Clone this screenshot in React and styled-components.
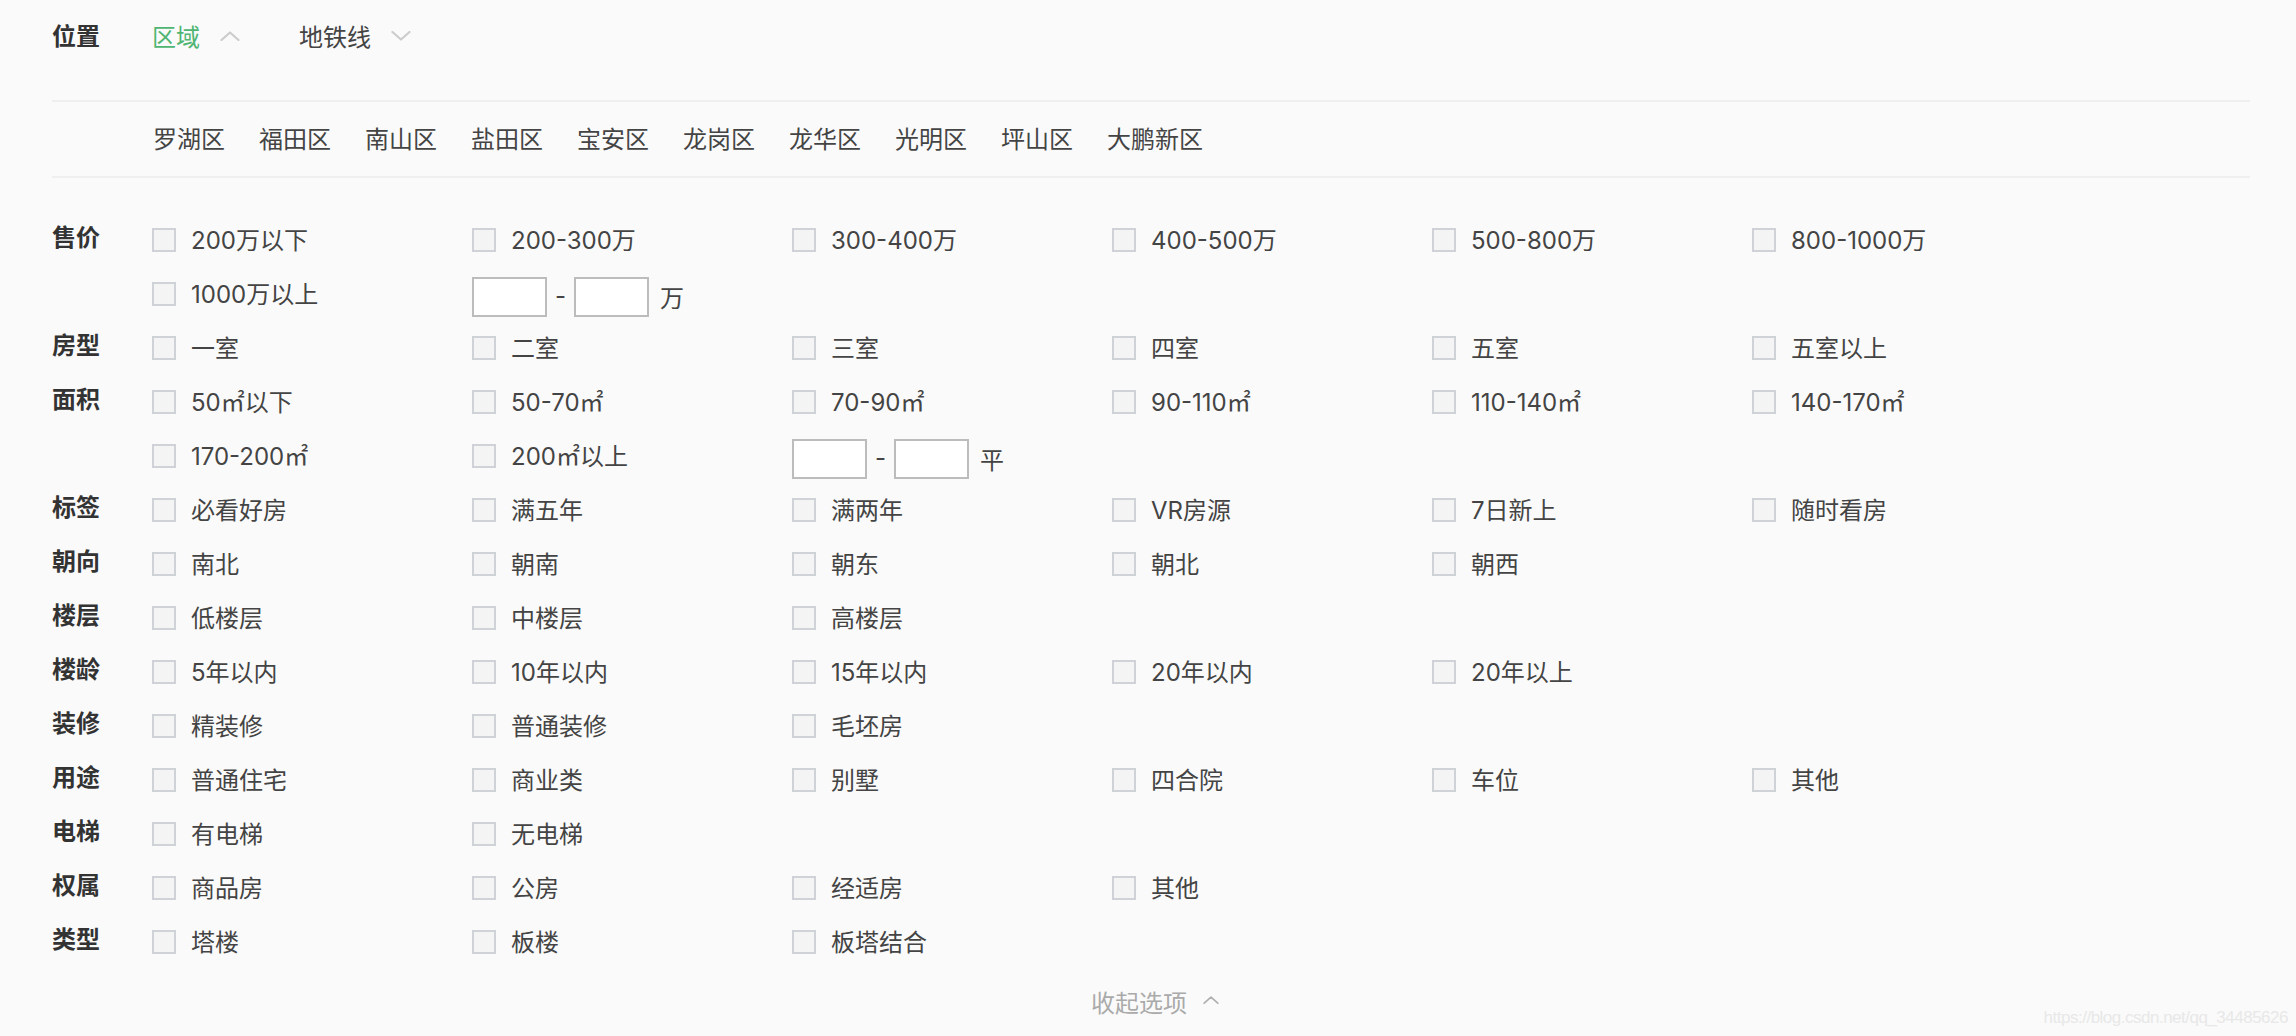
import React from "react";
import styled, { createGlobalStyle } from "styled-components";

const GlobalStyle = createGlobalStyle`
  html, body {
    margin: 0;
    padding: 0;
    background: #fafafa;
  }
  body {
    font-family: Inter, "Noto Sans CJK SC", sans-serif;
    color: #333;
  }
`;

const filters = [
  {
    label: "售价",
    options: ["200万以下", "200-300万", "300-400万", "400-500万", "500-800万", "800-1000万", "1000万以上"],
    range: "万",
  },
  { label: "房型", options: ["一室", "二室", "三室", "四室", "五室", "五室以上"] },
  {
    label: "面积",
    options: ["50㎡以下", "50-70㎡", "70-90㎡", "90-110㎡", "110-140㎡", "140-170㎡", "170-200㎡", "200㎡以上"],
    range: "平",
  },
  { label: "标签", options: ["必看好房", "满五年", "满两年", "VR房源", "7日新上", "随时看房"] },
  { label: "朝向", options: ["南北", "朝南", "朝东", "朝北", "朝西"] },
  { label: "楼层", options: ["低楼层", "中楼层", "高楼层"] },
  { label: "楼龄", options: ["5年以内", "10年以内", "15年以内", "20年以内", "20年以上"] },
  { label: "装修", options: ["精装修", "普通装修", "毛坯房"] },
  { label: "用途", options: ["普通住宅", "商业类", "别墅", "四合院", "车位", "其他"] },
  { label: "电梯", options: ["有电梯", "无电梯"] },
  { label: "权属", options: ["商品房", "公房", "经适房", "其他"] },
  { label: "类型", options: ["塔楼", "板楼", "板塔结合"] },
];

const districts = ["罗湖区", "福田区", "南山区", "盐田区", "宝安区", "龙岗区", "龙华区", "光明区", "坪山区", "大鹏新区"];

const Chevron = ({ up, color = "#cccccc", w = 20, h = 10 }) => (
  <svg width={w} height={h} viewBox="0 0 20 10" fill="none">
    <polyline
      points={up ? "1.5,9 10,1.5 18.5,9" : "1.5,1 10,8.5 18.5,1"}
      stroke={color}
      strokeWidth="2.2"
      strokeLinecap="round"
      strokeLinejoin="round"
    />
  </svg>
);

const App = () => {
  return (
    <>
      <GlobalStyle />
      <Page>
        <Header>
          <Label>位置</Label>
          <Tab $active>
            区域
            <Chevron up />
          </Tab>
          <Tab>
            地铁线
            <Chevron />
          </Tab>
        </Header>
        <Districts>
          {districts.map((d) => (
            <District key={d}>{d}</District>
          ))}
        </Districts>
        <Options>
          {filters.map((f) => (
            <FilterRow key={f.label}>
              <Label>{f.label}</Label>
              <Grid>
                {f.options.map((o) => (
                  <Item key={o}>
                    <Box />
                    <ItemText>{o}</ItemText>
                  </Item>
                ))}
                {f.range && (
                  <Range>
                    <Input />
                    <Dash>-</Dash>
                    <Input />
                    <Unit>{f.range}</Unit>
                  </Range>
                )}
              </Grid>
            </FilterRow>
          ))}
        </Options>
        <Footer>
          <Collapse>
            收起选项
            <Chevron up color="#b0b0b0" w={16} h={8} />
          </Collapse>
        </Footer>
        <Watermark>https://blog.csdn.net/qq_34485626</Watermark>
      </Page>
    </>
  );
};

const Page = styled.div`
  position: relative;
  height: 1036px;
  padding: 0 46px 0 52px;
  box-sizing: border-box;
  background: #fafafa;
  overflow: hidden;
`;

const Label = styled.div`
  width: 100px;
  height: 54px;
  flex-shrink: 0;
  font-size: 24px;
  font-weight: 700;
  color: #333;
  line-height: 50px;
`;

const Header = styled.div`
  display: flex;
  align-items: center;
  height: 74px;

  ${Label} {
    line-height: 54px;
  }
`;

const Tab = styled.div`
  display: flex;
  align-items: center;
  gap: 20px;
  margin-right: 59px;
  padding-bottom: 3px;
  font-size: 24px;
  color: ${(p) => (p.$active ? "#4fb572" : "#444")};
`;

const Districts = styled.div`
  display: flex;
  align-items: center;
  height: 70px;
  margin-top: 26px;
  padding-left: 101px;
  padding-bottom: 4px;
  box-sizing: content-box;
  border-top: 2px solid #efefef;
  border-bottom: 2px solid #efefef;
`;

const District = styled.div`
  font-size: 24px;
  color: #444;
  margin-right: 34px;
`;

const Options = styled.div`
  padding-top: 35px;
`;

const FilterRow = styled.div`
  display: flex;
`;

const Grid = styled.div`
  display: grid;
  grid-template-columns: repeat(6, 320px);
`;

const Item = styled.div`
  display: flex;
  align-items: center;
  height: 54px;
  font-size: 24px;
  color: #444;
`;

const ItemText = styled.span`
  padding-bottom: 3px;
`;

const Box = styled.span`
  width: 24px;
  height: 24px;
  box-sizing: border-box;
  border: 2px solid #cfd3d7;
  background: #f4f4f4;
  margin-right: 15px;
  flex-shrink: 0;
`;

const Range = styled.div`
  display: flex;
  align-items: center;
  height: 54px;
  padding-top: 6px;
  box-sizing: border-box;
  font-size: 24px;
  color: #444;
  grid-column: span 2;
`;

const Input = styled.span`
  width: 75px;
  height: 40px;
  box-sizing: border-box;
  border: 2px solid #bcbcbc;
  background: #fff;
`;

const Dash = styled.span`
  margin: 0 8px;
  padding-bottom: 4px;
`;

const Unit = styled.span`
  margin-left: 11px;
  padding-bottom: 2px;
`;

const Footer = styled.div`
  display: flex;
  justify-content: center;
  align-items: center;
  height: 67px;
  padding-bottom: 3px;
  box-sizing: border-box;
`;

const Collapse = styled.div`
  display: flex;
  align-items: center;
  gap: 16px;
  font-size: 24px;
  color: #aaa;
  transform: translateX(4px);

  svg {
    margin-top: -2px;
  }
`;

const Watermark = styled.div`
  position: absolute;
  right: 8px;
  bottom: 8px;
  font-family: "Liberation Sans", sans-serif;
  font-size: 17px;
  color: #e8e8e8;
  letter-spacing: -0.5px;
`;

export default App;
